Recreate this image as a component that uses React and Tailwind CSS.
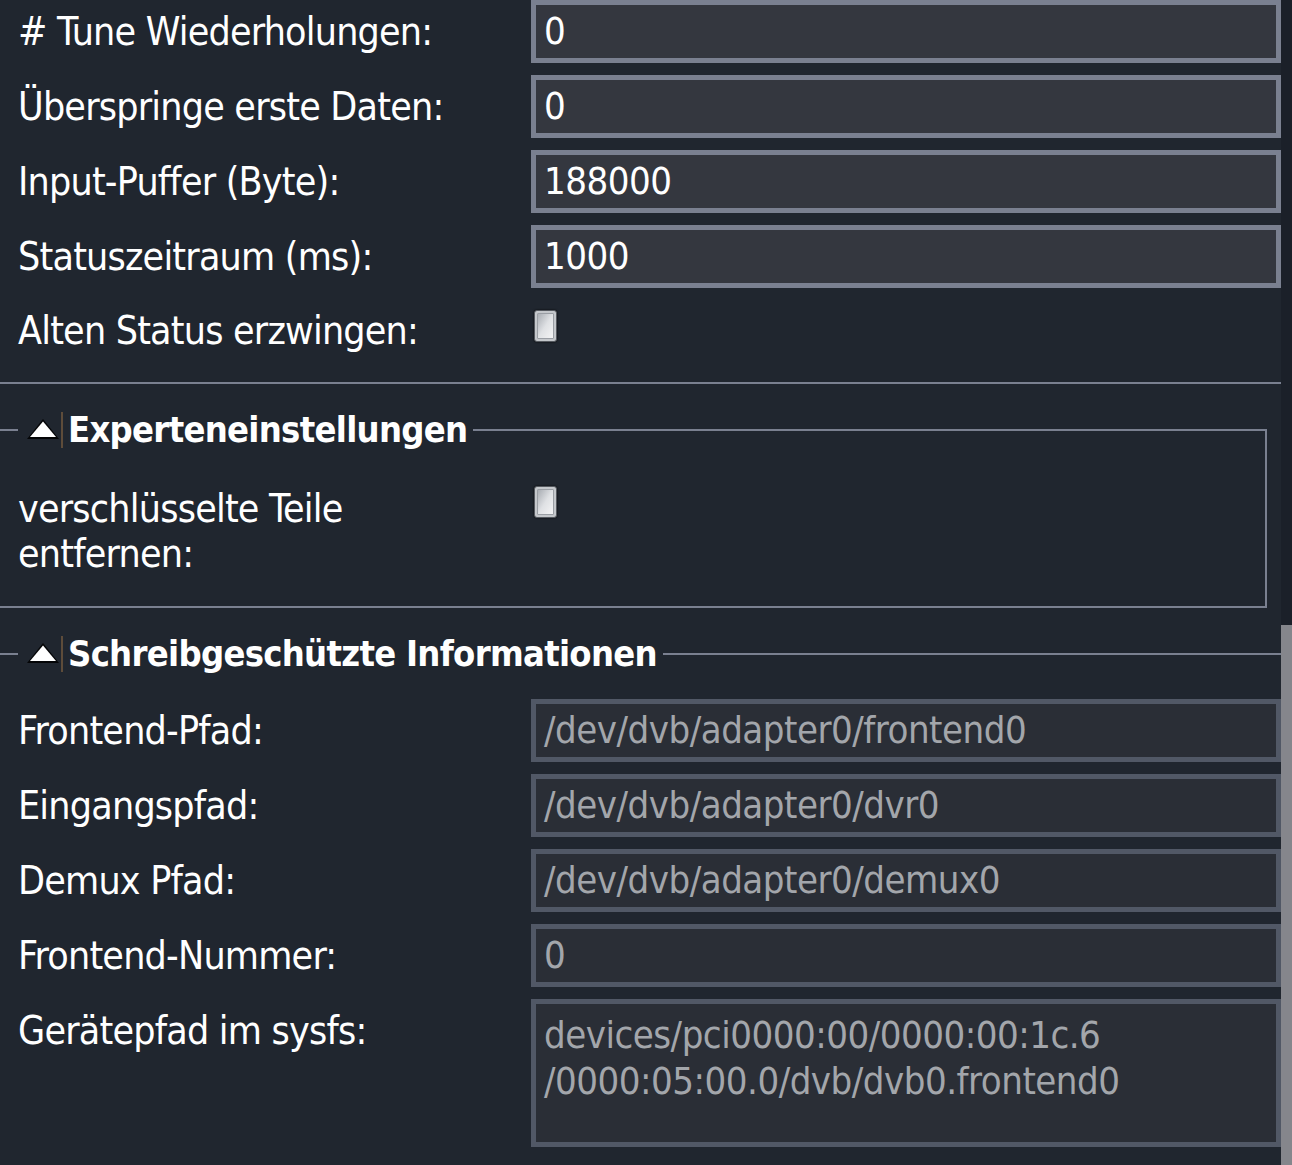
import React from "react"

const font = { fontFamily: '"DejaVu Sans Condensed", "DejaVu Sans", sans-serif' }

// Editable text input row
function InputRow({ label, value }) {
  return (
    <div className="flex items-center h-[63px] mb-[12px]">
      <div className="w-[531px] pl-[18px] text-[39px] tracking-[-0.8px] text-white leading-[45px]">{label}</div>
      <div className="w-[750px] h-[63px] border-[5px] border-[#7a8090] bg-[#34373f] flex items-center px-[8px] text-[38px] tracking-[-0.5px] text-white">
        {value}
      </div>
    </div>
  )
}

// Read-only field row
function ReadonlyRow({ label, value }) {
  return (
    <div className="flex items-center h-[63px] mb-[12px]">
      <div className="w-[531px] pl-[18px] text-[39px] tracking-[-0.8px] text-white leading-[45px]">{label}</div>
      <div className="w-[750px] h-[63px] border-[5px] border-[#515866] bg-[#2a2e36] flex items-center px-[8px] text-[38px] tracking-[-0.5px] text-[#a3a6ab]">
        {value}
      </div>
    </div>
  )
}

function Checkbox() {
  return (
    <div className="w-[23px] h-[32px] rounded-[3px] border border-[#55595f] bg-[#c4c7cb] p-[2px] shadow-[0_0_2px_rgba(0,0,0,0.9)]">
      <div className="w-full h-full rounded-[1px] border border-[#9a9ea4] bg-gradient-to-br from-[#a9adb3] via-[#dfe1e4] to-[#f4f4f5]" />
    </div>
  )
}

function Legend({ children }) {
  return (
    <legend className="ml-[18px] pl-[8px] pr-[6px] flex items-center">
      <span className="flex items-center h-[40px]">
        <svg width="34" height="24" viewBox="0 0 34 24">
          <polygon points="17,1 33,21 1,21" fill="#000" opacity="0.85" />
          <polygon points="17,3.5 30,19 4,19" fill="#fff" />
        </svg>
        <span className="w-[2px] h-[36px] bg-[#5e4c3a] ml-[1px] mr-[5px]" />
      </span>
      <span className="text-[36px] tracking-[-0.7px] font-bold text-white leading-[40px]">{children}</span>
    </legend>
  )
}

export default function App() {
  return (
    <div className="flex w-[1292px] h-[1165px] overflow-hidden bg-[#20262f]" style={font}>
      <div className="w-[1281px] shrink-0">
        <InputRow label="# Tune Wiederholungen:" value="0" />
        <InputRow label="Überspringe erste Daten:" value="0" />
        <InputRow label="Input-Puffer (Byte):" value="188000" />
        <InputRow label="Statuszeitraum (ms):" value="1000" />

        {/* Checkbox row */}
        <div className="flex h-[63px]">
          <div className="w-[534px] pl-[18px] pt-[8px] text-[39px] tracking-[-0.8px] text-white leading-[45px]">Alten Status erzwingen:</div>
          <div className="pt-[10px]">
            <Checkbox />
          </div>
        </div>

        <div className="h-[19px]" />
        <div className="h-[2px] bg-[#7a8090]" />

        {/* Experteneinstellungen */}
        <fieldset className="mt-[26px] w-[1267px] border-2 border-l-0 border-[#7a8090] pb-[30px]">
          <Legend>Experteneinstellungen</Legend>
          <div className="flex pt-[36px]">
            <div className="w-[534px] pl-[18px] text-[39px] tracking-[-0.8px] text-white leading-[45px]">
              <div className="w-[400px]">verschlüsselte Teile entfernen:</div>
            </div>
            <div>
              <Checkbox />
            </div>
          </div>
        </fieldset>

        {/* Schreibgeschützte Informationen */}
        <fieldset className="mt-[26px] w-[1290px] border-2 border-l-0 border-[#7a8090] pb-[60px]">
          <Legend>Schreibgeschützte Informationen</Legend>
          <div className="pt-[25px]">
            <ReadonlyRow label="Frontend-Pfad:" value="/dev/dvb/adapter0/frontend0" />
            <ReadonlyRow label="Eingangspfad:" value="/dev/dvb/adapter0/dvr0" />
            <ReadonlyRow label="Demux Pfad:" value="/dev/dvb/adapter0/demux0" />
            <ReadonlyRow label="Frontend-Nummer:" value="0" />
            <div className="flex">
              <div className="w-[531px] h-[63px] flex items-center pl-[18px] text-[39px] tracking-[-0.8px] text-white leading-[45px]">Gerätepfad im sysfs:</div>
              <div className="w-[750px] h-[148px] border-[5px] border-[#515866] bg-[#2a2e36] px-[8px] pt-[8px] text-[38px] tracking-[-0.5px] leading-[46px] text-[#a3a6ab]">
                devices/pci0000:00/0000:00:1c.6
                <br />
                /0000:05:00.0/dvb/dvb0.frontend0
              </div>
            </div>
          </div>
        </fieldset>
      </div>

      {/* Scrollbar */}
      <div className="w-[11px] shrink-0 flex flex-col">
        <div className="h-[625px] bg-[#1b2029]" />
        <div className="flex-1 bg-[#85868c]" />
      </div>
    </div>
  )
}
